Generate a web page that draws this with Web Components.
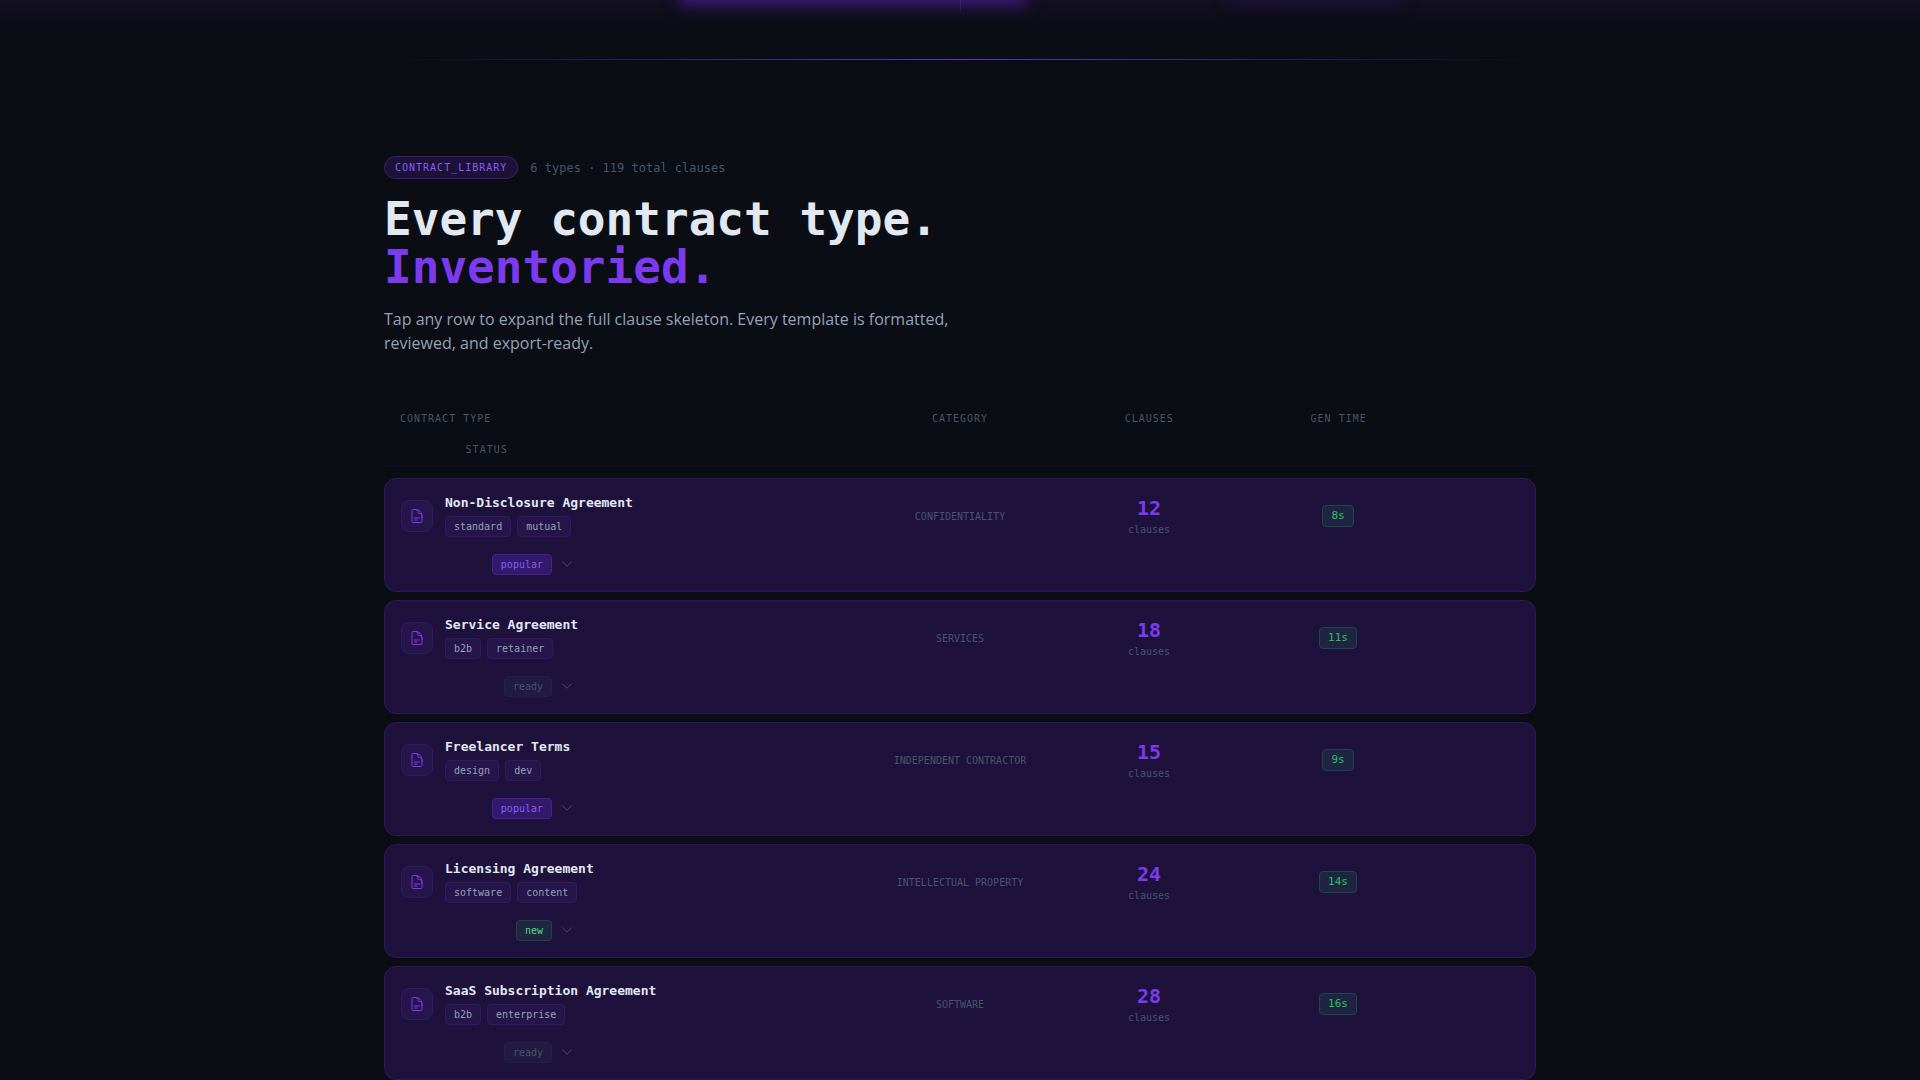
<!DOCTYPE html>
<html lang="en">
<head>
<meta charset="utf-8">
<title>Contract library</title>
<style>
:root{
    --bg:#0a0d14;
    --card:#1e123d;
    --line:#2b1957;
    --violet:#7c3aed;
    --text:#e2e8f0;
    --soft:#94a3b8;
    --dim:#475569;
    --green:#22c55e;
    --mono:"DejaVu Sans Mono","Liberation Mono",monospace;
    --sans:"Open Sans","Noto Sans",sans-serif;
}
body{
    margin:0;
    background:var(--bg);
    color:var(--text);
    font-family:var(--mono);
    overflow:hidden
}
</style>
</head>
<body>
<hero-edge></hero-edge>
<contract-library>
    <section-head slot="head" label="CONTRACT_LIBRARY" meta="6 types · 119 total clauses">
        <span slot="title">Every contract type.</span>
        <span slot="accent">Inventoried.</span>
        <span slot="text">Tap any row to expand the full clause skeleton. Every template is formatted, reviewed, and export-ready.</span>
    </section-head>
</contract-library>

<script>
const CONTRACTS = [
  { name: "Non-Disclosure Agreement", tags: ["standard", "mutual"], category: "CONFIDENTIALITY", clauses: 12, time: "8s", status: "popular" },
  { name: "Service Agreement", tags: ["b2b", "retainer"], category: "SERVICES", clauses: 18, time: "11s", status: "ready" },
  { name: "Freelancer Terms", tags: ["design", "dev"], category: "INDEPENDENT CONTRACTOR", clauses: 15, time: "9s", status: "popular" },
  { name: "Licensing Agreement", tags: ["software", "content"], category: "INTELLECTUAL PROPERTY", clauses: 24, time: "14s", status: "new" },
  { name: "SaaS Subscription Agreement", tags: ["b2b", "enterprise"], category: "SOFTWARE", clauses: 28, time: "16s", status: "ready" },
];

class HeroEdge extends HTMLElement {
  constructor() {
    super();
    this.attachShadow({ mode: "open" });
    this.shadowRoot.innerHTML = `
    <style>
    :host{
        display:flex;
        flex-direction:column;
        justify-content:flex-end;
        align-items:center;
        height:60px;
        position:relative;
        overflow:hidden
    }
    .haze{
        position:absolute;
        inset:0 0 auto;
        height:28px;
        background:linear-gradient(#130f22,transparent)
    }
    .glow{
        position:absolute;
        top:-32px;
        left:calc(50% - 280px);
        width:346px;
        height:36px;
        background:#431a86;
        filter:blur(8px)
    }
    .glow.faint{
        left:calc(50% + 270px);
        width:170px;
        background:#1d123c
    }
    .stem{
        position:absolute;
        top:0;
        left:50%;
        width:1px;
        height:16px;
        background:linear-gradient(#46208a,transparent)
    }
    .rule{
        width:60%;
        height:1px;
        background:linear-gradient(90deg,transparent,var(--violet),transparent);
        opacity:.8
    }
    </style>
    <div class="haze"></div>
    <div class="glow"></div>
    <div class="glow faint"></div>
    <div class="stem"></div>
    <div class="rule"></div>
`;
  }
}

class SectionHead extends HTMLElement {
  constructor() {
    super();
    this.attachShadow({ mode: "open" });
    this.shadowRoot.innerHTML = `
    <style>
    :host{
        display:flex;
        flex-direction:column;
        gap:16px
    }
    .top{
        display:flex;
        align-items:center;
        gap:12px;
        font-size:12px;
        color:var(--dim)
    }
    .label{
        padding:3px 10px;
        border:1px solid #3b2070;
        border-radius:12px;
        background:#1c1238;
        color:#8b5cf6;
        font-size:10px;
        line-height:15px;
        letter-spacing:1px
    }
    h2{
        margin:0;
        font-size:46px;
        line-height:48px;
        font-weight:700
    }
    h2 slot{
        display:block
    }
    .accent{
        color:var(--violet)
    }
    p{
        margin:0;
        max-width:576px;
        font-family:var(--sans);
        font-size:16px;
        line-height:24px;
        color:var(--soft)
    }
    </style>
    <div class="top">
        <span class="label"></span>
        <span class="meta"></span>
    </div>
    <h2><slot name="title"></slot><slot name="accent" class="accent"></slot></h2>
    <p><slot name="text"></slot></p>
`;
  }
  connectedCallback() {
    this.shadowRoot.querySelector(".label").textContent = this.getAttribute("label");
    this.shadowRoot.querySelector(".meta").textContent = this.getAttribute("meta");
  }
}

class TagPill extends HTMLElement {
  constructor() {
    super();
    this.attachShadow({ mode: "open" });
    this.shadowRoot.innerHTML = `
    <style>
    :host{
        display:block;
        padding:2px 8px;
        border:1px solid #2f1b5f;
        border-radius:4px;
        background:#25154b;
        color:var(--soft);
        font-size:10px;
        line-height:15px
    }
    :host([kind="popular"]){
        background:#321969;
        border-color:#46238c;
        color:#8b5cf6
    }
    :host([kind="ready"]){
        background:#211a41;
        border-color:#261e48;
        color:var(--dim)
    }
    :host([kind="new"]){
        background:#1e2641;
        border-color:#1f4549;
        color:#4ade80
    }
    :host([kind="time"]){
        background:#1e2441;
        border-color:#1f4549;
        color:var(--green);
        font-size:11px;
        line-height:16px
    }
    </style>
    <slot></slot>
`;
  }
}

class ContractRow extends HTMLElement {
  constructor() {
    super();
    this._data = null;
    this.attachShadow({ mode: "open" });
    this.shadowRoot.innerHTML = `
    <style>
    :host{
        display:block
    }
    button{
        display:grid;
        grid-template-columns:repeat(12,1fr);
        gap:16px;
        align-items:center;
        box-sizing:border-box;
        width:100%;
        padding:16px;
        border:1px solid var(--line);
        border-radius:12px;
        background:var(--card);
        color:inherit;
        font:inherit;
        text-align:left;
        cursor:pointer
    }
    .type{
        grid-column:span 5;
        display:flex;
        align-items:center;
        gap:12px
    }
    .icon{
        display:grid;
        place-items:center;
        box-sizing:border-box;
        width:32px;
        height:32px;
        border:1px solid #2f1b5f;
        border-radius:8px;
        background:#25154b;
        color:var(--violet)
    }
    .name{
        font-size:13px;
        line-height:16px;
        font-weight:700;
        margin-bottom:5px
    }
    .tags{
        display:flex;
        gap:6px
    }
    .category,.count,.time{
        grid-column:span 2;
        text-align:center;
        font-size:10px;
        line-height:15px;
        color:var(--dim)
    }
    .number{
        font-size:20px;
        line-height:27px;
        font-weight:700;
        color:var(--violet)
    }
    .time{
        display:flex;
        justify-content:center
    }
    .status{
        grid-column:span 2;
        display:flex;
        justify-content:flex-end;
        align-items:center;
        gap:8px;
        height:22px;
        color:var(--dim)
    }
    svg{
        display:block;
        fill:none;
        stroke:currentColor;
        stroke-linecap:round;
        stroke-linejoin:round
    }
    </style>

    <button type="button" aria-expanded="false">
        <div class="type">
            <span class="icon">
                <svg width="16" height="16" viewBox="0 0 24 24" stroke-width="1.5"><path d="M19.5 14.25v-2.625a3.375 3.375 0 0 0-3.375-3.375h-1.5A1.125 1.125 0 0 1 13.5 7.125v-1.5a3.375 3.375 0 0 0-3.375-3.375H8.25m0 12.75h7.5m-7.5 3H12M10.5 2.25H5.625c-.621 0-1.125.504-1.125 1.125v17.25c0 .621.504 1.125 1.125 1.125h12.75c.621 0 1.125-.504 1.125-1.125V11.25a9 9 0 0 0-9-9Z"/></svg>
            </span>
            <div>
                <div class="name"></div>
                <div class="tags"></div>
            </div>
        </div>
        <div class="category"></div>
        <div class="count">
            <div class="number"></div>
            <div>clauses</div>
        </div>
        <div class="time"><tag-pill kind="time"></tag-pill></div>
        <div class="status">
            <tag-pill></tag-pill>
            <svg width="14" height="14" viewBox="0 0 24 24" stroke-width="1.5"><path d="m19.5 8.25-7.5 7.5-7.5-7.5"/></svg>
        </div>
    </button>
`;
    this.$ = {
      name: this.shadowRoot.querySelector(".name"),
      tags: this.shadowRoot.querySelector(".tags"),
      category: this.shadowRoot.querySelector(".category"),
      number: this.shadowRoot.querySelector(".number"),
      time: this.shadowRoot.querySelector(".time tag-pill"),
      status: this.shadowRoot.querySelector(".status tag-pill"),
    };
  }
  set data(d) {
    this._data = d;
    this.render();
  }
  render() {
    if (!this._data) return;
    this.$.name.textContent = this._data.name;
    this.$.category.textContent = this._data.category;
    this.$.number.textContent = this._data.clauses;
    this.$.time.textContent = this._data.time;
    this.$.status.textContent = this._data.status;
    this.$.status.setAttribute("kind", this._data.status);
    this.$.tags.replaceChildren();
    this._data.tags.forEach((t) => {
      const tag = document.createElement("tag-pill");
      tag.textContent = t;
      this.$.tags.appendChild(tag);
    });
  }
}

class ContractLibrary extends HTMLElement {
  constructor() {
    super();
    this.attachShadow({ mode: "open" });
    this.shadowRoot.innerHTML = `
    <style>
    :host{
        display:block;
        max-width:1152px;
        margin:0 auto;
        padding:96px 24px 0
    }
    .columns{
        display:grid;
        grid-template-columns:repeat(12,1fr);
        gap:16px;
        margin:48px 0 12px;
        padding:8px 16px;
        border-bottom:1px solid #120e22;
        font-size:10px;
        line-height:15px;
        letter-spacing:1px;
        text-align:center;
        color:var(--dim)
    }
    .columns span{
        grid-column:span 2
    }
    .columns .first{
        grid-column:span 5;
        text-align:left
    }
    .rows{
        display:flex;
        flex-direction:column;
        gap:8px
    }
    </style>
    <slot name="head"></slot>
    <div class="columns">
        <span class="first">CONTRACT TYPE</span>
        <span>CATEGORY</span>
        <span>CLAUSES</span>
        <span>GEN TIME</span>
        <span>STATUS</span>
    </div>
    <div class="rows"></div>
`;
  }
  connectedCallback() {
    const rows = this.shadowRoot.querySelector(".rows");
    CONTRACTS.forEach((c) => {
      const row = document.createElement("contract-row");
      row.data = c;
      rows.appendChild(row);
    });
  }
}

customElements.define("hero-edge", HeroEdge);
customElements.define("section-head", SectionHead);
customElements.define("tag-pill", TagPill);
customElements.define("contract-row", ContractRow);
customElements.define("contract-library", ContractLibrary);
</script>
</body>
</html>
